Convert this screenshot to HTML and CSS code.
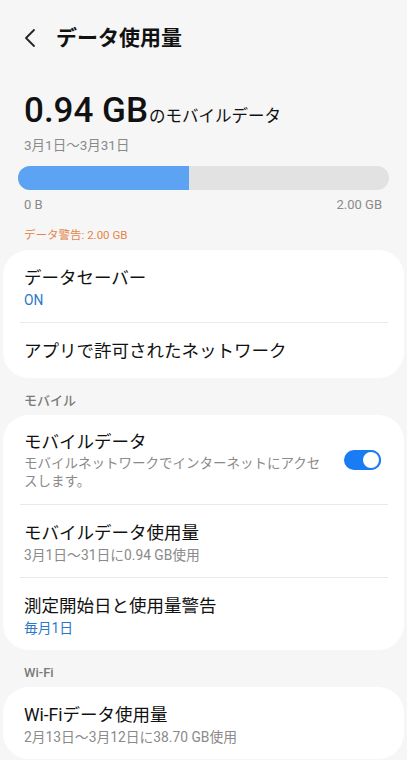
FILE: index.html
```
<!DOCTYPE html>
<html lang="ja">
<head>
    <meta charset="UTF-8">
    <meta name="viewport" content="width=device-width, initial-scale=1.0">
    <title>データ使用量</title>
    <link rel="stylesheet" href="styles.css">
</head>
<body>
    <div class="header">
        <svg class="back" width="12" height="20" viewBox="0 0 12 20">
            <polyline points="10,2 2,10 10,18" fill="none" stroke="#222" stroke-width="1.8" stroke-linecap="round" stroke-linejoin="round"/>
        </svg>
        <h1>データ使用量</h1>
    </div>

    <div class="summary">
        <div class="amount"><span class="big">0.94 GB</span><span class="unit">のモバイルデータ</span></div>
        <div class="period">3月1日〜3月31日</div>
        <div class="bar"><div class="fill" style="width: 46%"></div></div>
        <div class="scale"><span>0 B</span><span>2.00 GB</span></div>
        <div class="warning">データ警告: 2.00 GB</div>
    </div>

    <div class="card">
        <div class="item">
            <div class="title">データセーバー</div>
            <div class="sub blue">ON</div>
        </div>
        <div class="item">
            <div class="title">アプリで許可されたネットワーク</div>
        </div>
    </div>

    <div class="label">モバイル</div>
    <div class="card">
        <div class="item row">
            <div class="text">
                <div class="title">モバイルデータ</div>
                <div class="sub desc">モバイルネットワークでインターネットにアクセスします。</div>
            </div>
            <div class="toggle"><div class="knob"></div></div>
        </div>
        <div class="item">
            <div class="title">モバイルデータ使用量</div>
            <div class="sub">3月1日〜31日に0.94 GB使用</div>
        </div>
        <div class="item">
            <div class="title">測定開始日と使用量警告</div>
            <div class="sub blue">毎月1日</div>
        </div>
    </div>

    <div class="label">Wi-Fi</div>
    <div class="card">
        <div class="item">
            <div class="title">Wi-Fiデータ使用量</div>
            <div class="sub">2月13日〜3月12日に38.70 GB使用</div>
        </div>
    </div>
</body>
</html>
```

FILE: styles.css
```
body {
    margin: 0;
    padding: 0;
    background-color: #f6f6f6;
    font-family: Roboto, "Noto Sans CJK JP", sans-serif;
    color: #111;
}
.header {
    display: flex;
    align-items: center;
    padding: 24px 0 0 24px;
    height: 28px;
}
.back {
    margin-right: 20px;
}
h1 {
    margin: 0;
    font-size: 21px;
    font-weight: bold;
    line-height: 28px;
}
.summary {
    padding: 39px 18px 0 18px;
}
.amount {
    display: flex;
    align-items: baseline;
    height: 40px;
    padding-left: 6px;
}
.big {
    font-size: 35px;
    font-weight: 500;
    line-height: 40px;
}
.unit {
    font-size: 16.5px;
    margin-left: 1px;
    line-height: 20px;
}
.period {
    padding-left: 6px;
    margin-top: 4px;
    font-size: 13.5px;
    line-height: 20px;
    color: #8a8a8a;
}
.bar {
    margin-top: 11px;
    height: 24px;
    border-radius: 12px;
    background-color: #e2e2e2;
    overflow: hidden;
}
.fill {
    height: 100%;
    background-color: #5ca4f3;
}
.scale {
    display: flex;
    justify-content: space-between;
    margin-top: 5px;
    padding: 0 7px 0 6px;
    font-size: 13px;
    line-height: 20px;
    color: #8a8a8a;
}
.warning {
    padding-left: 6px;
    margin-top: 11px;
    font-size: 11.5px;
    line-height: 18px;
    color: #e5854a;
}
.card {
    margin: 6px 3px 0 3px;
    background: white;
    border-radius: 26px;
}
.item {
    padding: 16px 8px 12px 4px;
    margin: 0 16px 0 17px;
    border-bottom: 1px solid #e9e9e9;
}
.item:last-child {
    border-bottom: none;
}
.title {
    font-size: 17.5px;
    line-height: 24px;
}
.item .title:only-child {
    padding-bottom: 3px;
}
.sub {
    font-size: 13.8px;
    line-height: 20px;
    color: #8a8a8a;
}
.blue {
    color: #2a78c6;
}
.row {
    display: flex;
    align-items: center;
    padding-top: 15px;
    padding-bottom: 14px;
}
.text {
    flex: 1;
}
.desc {
    font-size: 13.5px;
    line-height: 18px;
    max-width: 300px;
}
.toggle {
    width: 37px;
    height: 20px;
    border-radius: 10px;
    background-color: #1a7cf2;
    margin-left: 19px;
    margin-right: -1px;
    display: flex;
    justify-content: flex-end;
}
.knob {
    width: 16px;
    height: 16px;
    border-radius: 50%;
    background: white;
    border: 2px solid #1a7cf2;
}
.label {
    margin: 14px 0 0 24px;
    font-size: 13px;
    font-weight: 500;
    line-height: 18px;
    color: #7a7a7a;
}
.label + .card {
    margin-top: 5px;
}
```
